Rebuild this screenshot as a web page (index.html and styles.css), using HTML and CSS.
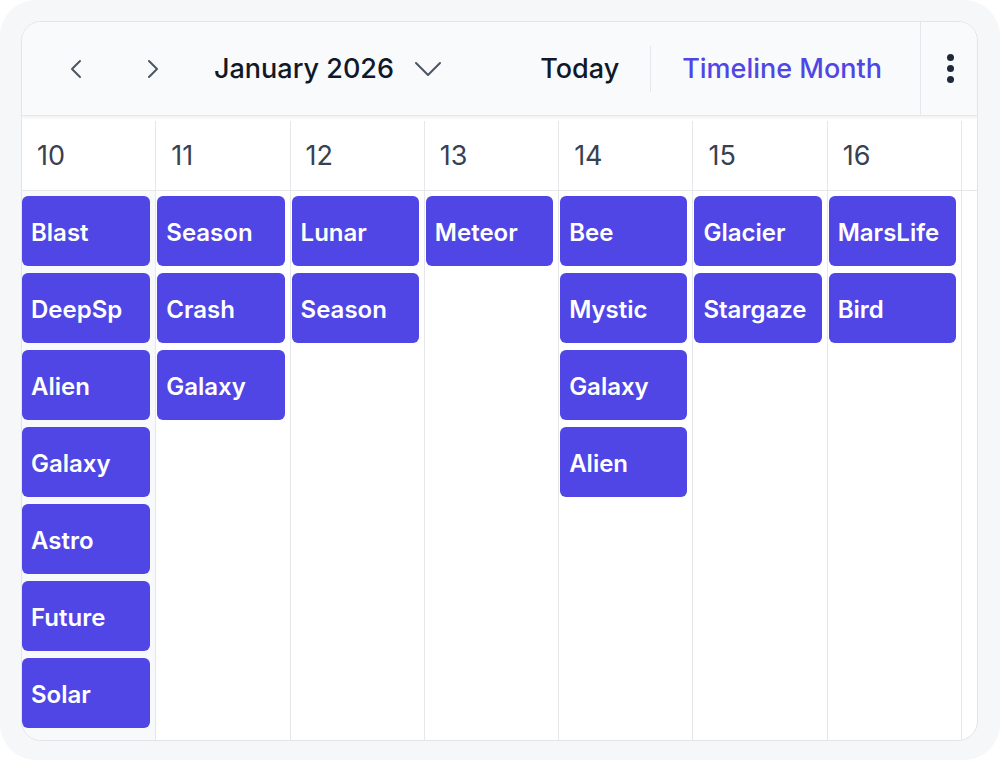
FILE: index.html
```html
<!DOCTYPE html>
<html lang="en">
<head>
  <meta charset="UTF-8" />
  <title>Timeline Month</title>
  <link rel="stylesheet" href="styles.css">
</head>
<body>
  <div class="frame">
    <div class="scheduler">
      <!-- Toolbar -->
      <div class="toolbar">
        <button class="nav-btn" aria-label="Previous">
          <svg width="14" height="22" viewBox="0 0 14 22"><path d="M11 3 L3 11 L11 19" /></svg>
        </button>
        <button class="nav-btn" aria-label="Next">
          <svg width="14" height="22" viewBox="0 0 14 22"><path d="M3 3 L11 11 L3 19" /></svg>
        </button>
        <div class="date-range">
          <span>January 2026</span>
          <svg width="28" height="16" viewBox="0 0 28 16"><path d="M2 2 L14 14 L26 2" /></svg>
        </div>

        <div class="toolbar-right">
          <button class="tb-btn today">Today</button>
          <div class="tb-sep"></div>
          <button class="tb-btn active">Timeline Month</button>
          <div class="more">
            <span class="dot"></span><span class="dot"></span><span class="dot"></span>
          </div>
        </div>
      </div>

      <!-- Timeline -->
      <div class="timeline">
        <div class="date-row">
          <div class="date-cell">10</div>
          <div class="date-cell">11</div>
          <div class="date-cell">12</div>
          <div class="date-cell">13</div>
          <div class="date-cell">14</div>
          <div class="date-cell">15</div>
          <div class="date-cell">16</div>
          <div class="date-cell gutter"></div>
        </div>

        <div class="event-row">
          <div class="day first">
            <div class="event">Blast</div>
            <div class="event">DeepSp</div>
            <div class="event">Alien</div>
            <div class="event">Galaxy</div>
            <div class="event">Astro</div>
            <div class="event">Future</div>
            <div class="event">Solar</div>
          </div>
          <div class="day">
            <div class="event">Season</div>
            <div class="event">Crash</div>
            <div class="event">Galaxy</div>
          </div>
          <div class="day">
            <div class="event">Lunar</div>
            <div class="event">Season</div>
          </div>
          <div class="day">
            <div class="event">Meteor</div>
          </div>
          <div class="day">
            <div class="event">Bee</div>
            <div class="event">Mystic</div>
            <div class="event">Galaxy</div>
            <div class="event">Alien</div>
          </div>
          <div class="day">
            <div class="event">Glacier</div>
            <div class="event">Stargaze</div>
          </div>
          <div class="day">
            <div class="event">MarsLife</div>
            <div class="event">Bird</div>
          </div>
          <div class="day gutter"></div>
        </div>
      </div>
    </div>
  </div>
</body>
</html>
```

FILE: styles.css
```css
/* ====== Page ====== */
body {
  margin: 0;
  background: #ffffff;
  font-family: Inter, "Noto Sans", sans-serif;
}

.frame {
  width: 1000px;
  height: 760px;
  box-sizing: border-box;
  padding: 21px 22px 21px 21px;
  background: #f6f7f8;
  border-radius: 36px;
}

/* ====== Scheduler shell ====== */
.scheduler {
  height: 100%;
  display: flex;
  flex-direction: column;
  background: #ffffff;
  border: 1px solid #e2e4e8;
  border-radius: 20px;
  overflow: hidden;
}

/* ====== Toolbar ====== */
.toolbar {
  height: 93px;
  flex: none;
  display: flex;
  align-items: center;
  padding-left: 15px;
  background: #f8fafc;
  border-bottom: 1px solid #e5e7eb;
  box-shadow: 0 2px 3px rgba(0, 0, 0, 0.06);
}
.toolbar button {
  font-family: inherit;
  background: none;
  border: none;
  padding: 0;
  cursor: pointer;
}
.nav-btn {
  width: 77px;
  height: 50px;
  display: flex;
  align-items: center;
  justify-content: center;
}
.nav-btn svg path,
.date-range svg path {
  fill: none;
  stroke: #4b5563;
  stroke-width: 2;
  stroke-linecap: round;
  stroke-linejoin: round;
}
.date-range {
  display: flex;
  align-items: center;
  gap: 20px;
  margin-left: 23px;
  font-size: 27px;
  font-weight: 500;
  color: #111827;
}

.toolbar-right {
  margin-left: auto;
  height: 100%;
  display: flex;
  align-items: center;
}
.tb-btn {
  font-size: 27px;
  font-weight: 500;
  color: #111827;
  height: 50px;
}
.tb-btn.today {
  padding: 0 31px 0 0 !important;
}
.tb-btn.active {
  color: #4f46e5;
  padding: 0 38px 0 31px !important;
}
.tb-sep {
  width: 1px;
  height: 46px;
  background: #e5e7eb;
}
.more {
  box-sizing: border-box;
  width: 57px;
  height: 100%;
  border-left: 1px solid #e5e7eb;
  display: flex;
  flex-direction: column;
  align-items: center;
  justify-content: center;
  gap: 4px;
  padding-left: 3px;
}
.dot {
  width: 7px;
  height: 7px;
  border-radius: 50%;
  background: #1f2937;
}

/* ====== Timeline grid ====== */
.timeline {
  flex: 1;
  display: flex;
  flex-direction: column;
  padding-top: 5px;
}
.date-row,
.event-row {
  display: grid;
  grid-template-columns: repeat(7, 1fr) 15px;
}
.date-row {
  height: 69px;
  border-bottom: 1px solid #e5e7eb;
}
.date-cell {
  display: flex;
  align-items: center;
  padding-left: 15px;
  font-size: 27px;
  color: #374151;
  border-right: 1px solid #e5e7eb;
}
.date-cell.gutter {
  padding: 0;
  border-right: none;
}

.event-row {
  flex: 1;
}
.day {
  display: flex;
  flex-direction: column;
  gap: 7px;
  padding: 5px 5px 0 1px;
  border-right: 1px solid #e5e7eb;
}
.day.first {
  background: #f8f9fb;
  padding-left: 0;
}
.day.gutter {
  border-right: none;
  padding: 0;
}

.event {
  height: 70px;
  box-sizing: border-box;
  display: flex;
  align-items: center;
  padding: 2px 0 0 9px;
  background: #4f46e5;
  color: #ffffff;
  font-size: 24px;
  font-weight: 600;
  border-radius: 6px;
  white-space: nowrap;
  overflow: hidden;
}
```
